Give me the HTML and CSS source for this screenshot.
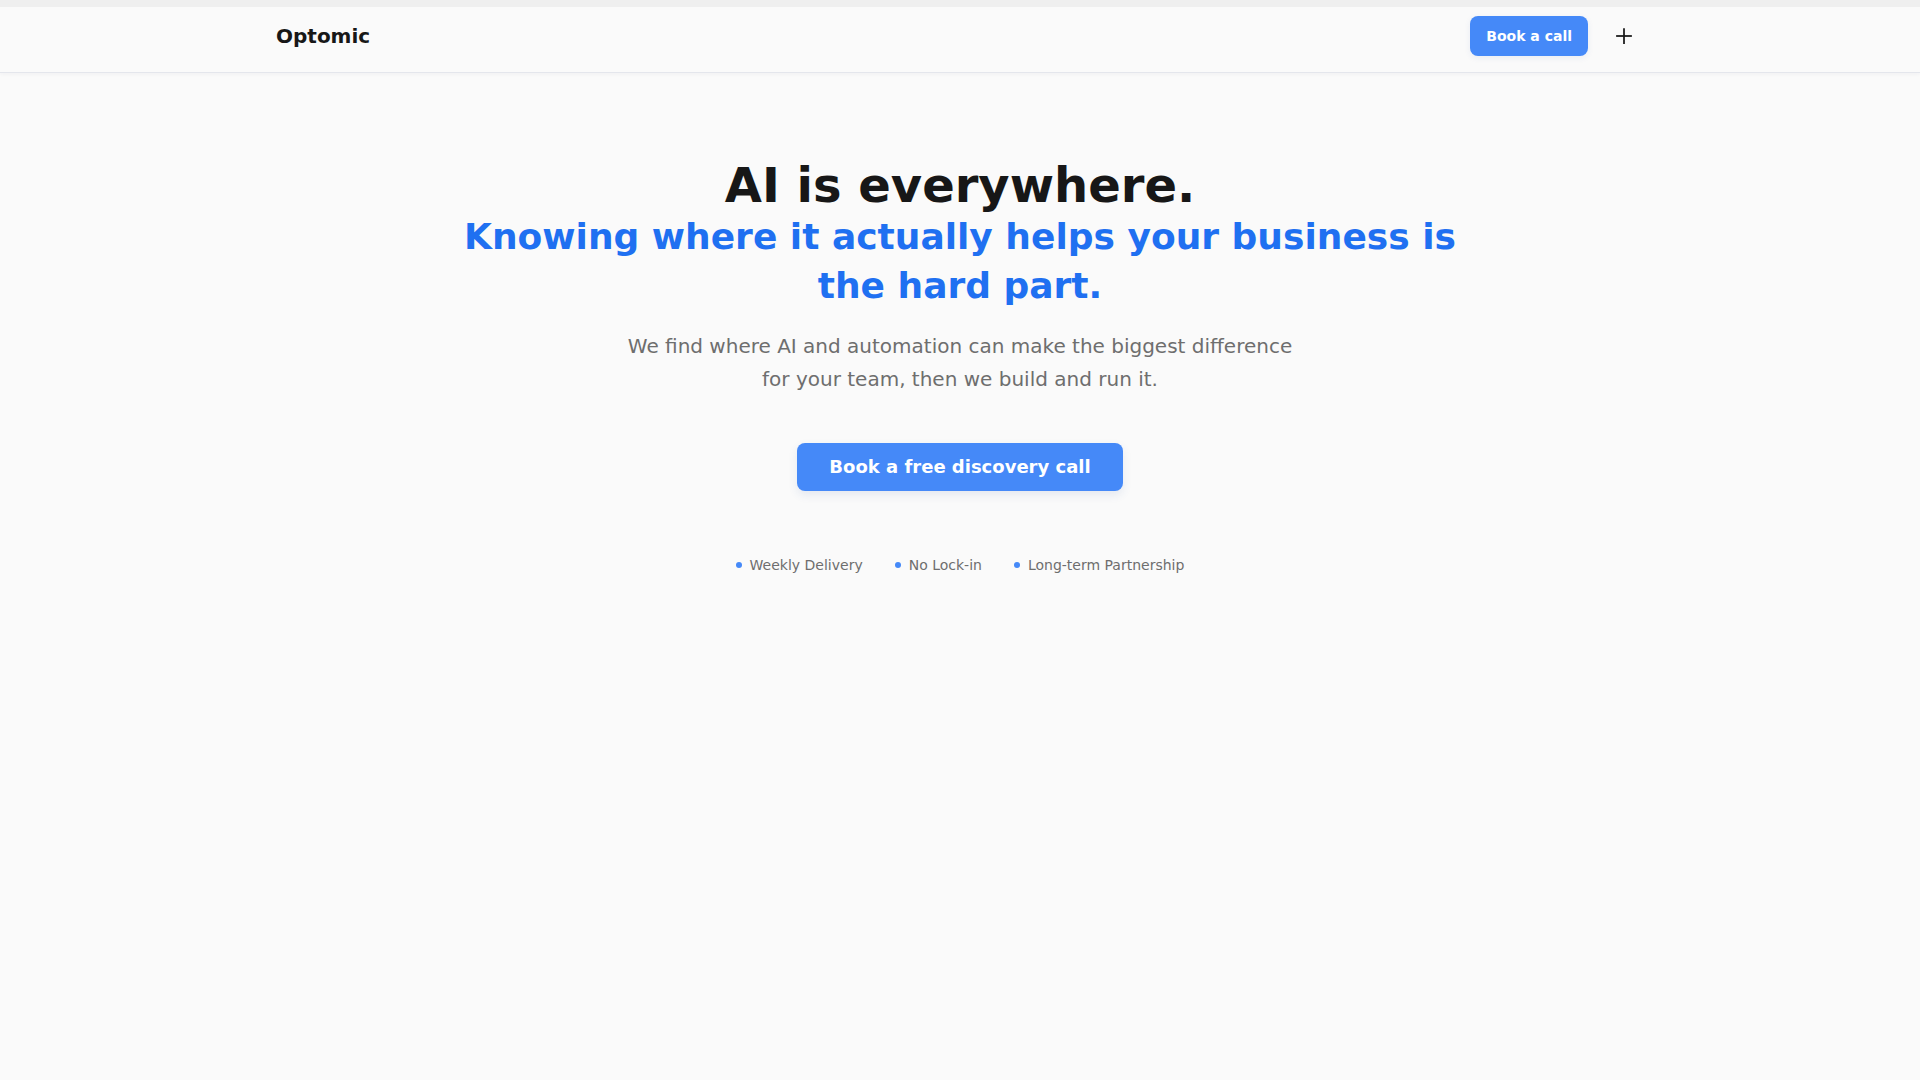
FILE: index.html
```html
<!DOCTYPE html>
<html lang="en">
<head>
    <meta charset="UTF-8">
    <meta name="viewport" content="width=device-width, initial-scale=1.0">
    <title>Optomic</title>
    <link rel="stylesheet" href="styles.css">
</head>
<body>

<header class="site-header">
    <div class="container header-inner">
        <a class="logo" href="#">Optomic</a>
        <div class="header-actions">
            <a class="btn btn-small" href="#">Book a call</a>
            <button class="icon-btn" aria-label="Open menu">
                <svg width="16" height="16" viewBox="0 0 16 16" fill="none" stroke="#171717" stroke-width="1.75" stroke-linecap="square">
                    <path d="M8 1v14"/>
                    <path d="M1 8h14"/>
                </svg>
            </button>
        </div>
    </div>
</header>

<main class="hero">
    <h1 class="hero-title">
        <span class="title-main">AI is everywhere.</span>
        <span class="title-accent">Knowing where it actually helps your business is the hard part.</span>
    </h1>

    <p class="hero-text">We find where AI and automation can make the biggest difference for your team, then we build and run it.</p>

    <a class="btn btn-large" href="#">Book a free discovery call</a>

    <ul class="features">
        <li><span class="dot"></span>Weekly Delivery</li>
        <li><span class="dot"></span>No Lock-in</li>
        <li><span class="dot"></span>Long-term Partnership</li>
    </ul>
</main>

</body>
</html>
```

FILE: styles.css
```css
body {
    margin: 0;
    font-family: "DejaVu Sans", sans-serif;
    background-color: #fafafa;
    color: #171717;
}
a {
    text-decoration: none;
}
.container {
    max-width: 1400px;
    margin: 0 auto;
    padding: 0 16px;
    box-sizing: border-box;
}
.site-header {
    border-top: 7px solid #efefef;
    border-bottom: 1px solid #e4e6ec;
    background-color: #fafafa;
    box-shadow: 0 1px 4px rgba(30, 40, 80, 0.05);
}
.header-inner {
    height: 65px;
    padding-bottom: 7px;
    display: flex;
    align-items: center;
    justify-content: space-between;
}
.logo {
    font-size: 20px;
    font-weight: bold;
    color: #171717;
}
.header-actions {
    display: flex;
    align-items: center;
    gap: 16px;
}
.btn {
    display: inline-flex;
    align-items: center;
    justify-content: center;
    background-color: #4589f8;
    color: white;
    font-weight: bold;
    border-radius: 8px;
    box-shadow: 0 2px 6px rgba(40, 80, 160, 0.08);
}
.btn-small {
    height: 40px;
    padding: 0 16px;
    font-size: 14px;
}
.icon-btn {
    width: 40px;
    height: 40px;
    display: flex;
    align-items: center;
    justify-content: center;
    padding: 0;
    border: none;
    background: none;
    cursor: pointer;
}
.hero {
    display: flex;
    flex-direction: column;
    align-items: center;
    text-align: center;
    padding: 86px 16px 0;
}
.hero-title {
    margin: 0;
    max-width: 1024px;
    font-weight: bold;
}
.title-main {
    display: block;
    font-size: 48px;
    line-height: 1.1;
    color: #171717;
}
.title-accent {
    display: block;
    font-size: 36px;
    line-height: 49px;
    color: #1f70f1;
}
.hero-text {
    max-width: 672px;
    margin: 20px 0 0;
    font-size: 20px;
    line-height: 33px;
    color: #6e6e6e;
}
.btn-large {
    margin-top: 47px;
    height: 48px;
    padding: 0 32px;
    font-size: 18px;
    box-shadow: 0 4px 10px rgba(40, 80, 160, 0.1);
}
.features {
    list-style: none;
    margin: 64px 0 0;
    padding: 0;
    display: flex;
    gap: 32px;
    font-size: 14px;
    line-height: 20px;
    color: #6e6e6e;
}
.features li {
    display: flex;
    align-items: center;
    gap: 8px;
}
.dot {
    width: 6px;
    height: 6px;
    border-radius: 50%;
    background-color: #4589f8;
}
```
